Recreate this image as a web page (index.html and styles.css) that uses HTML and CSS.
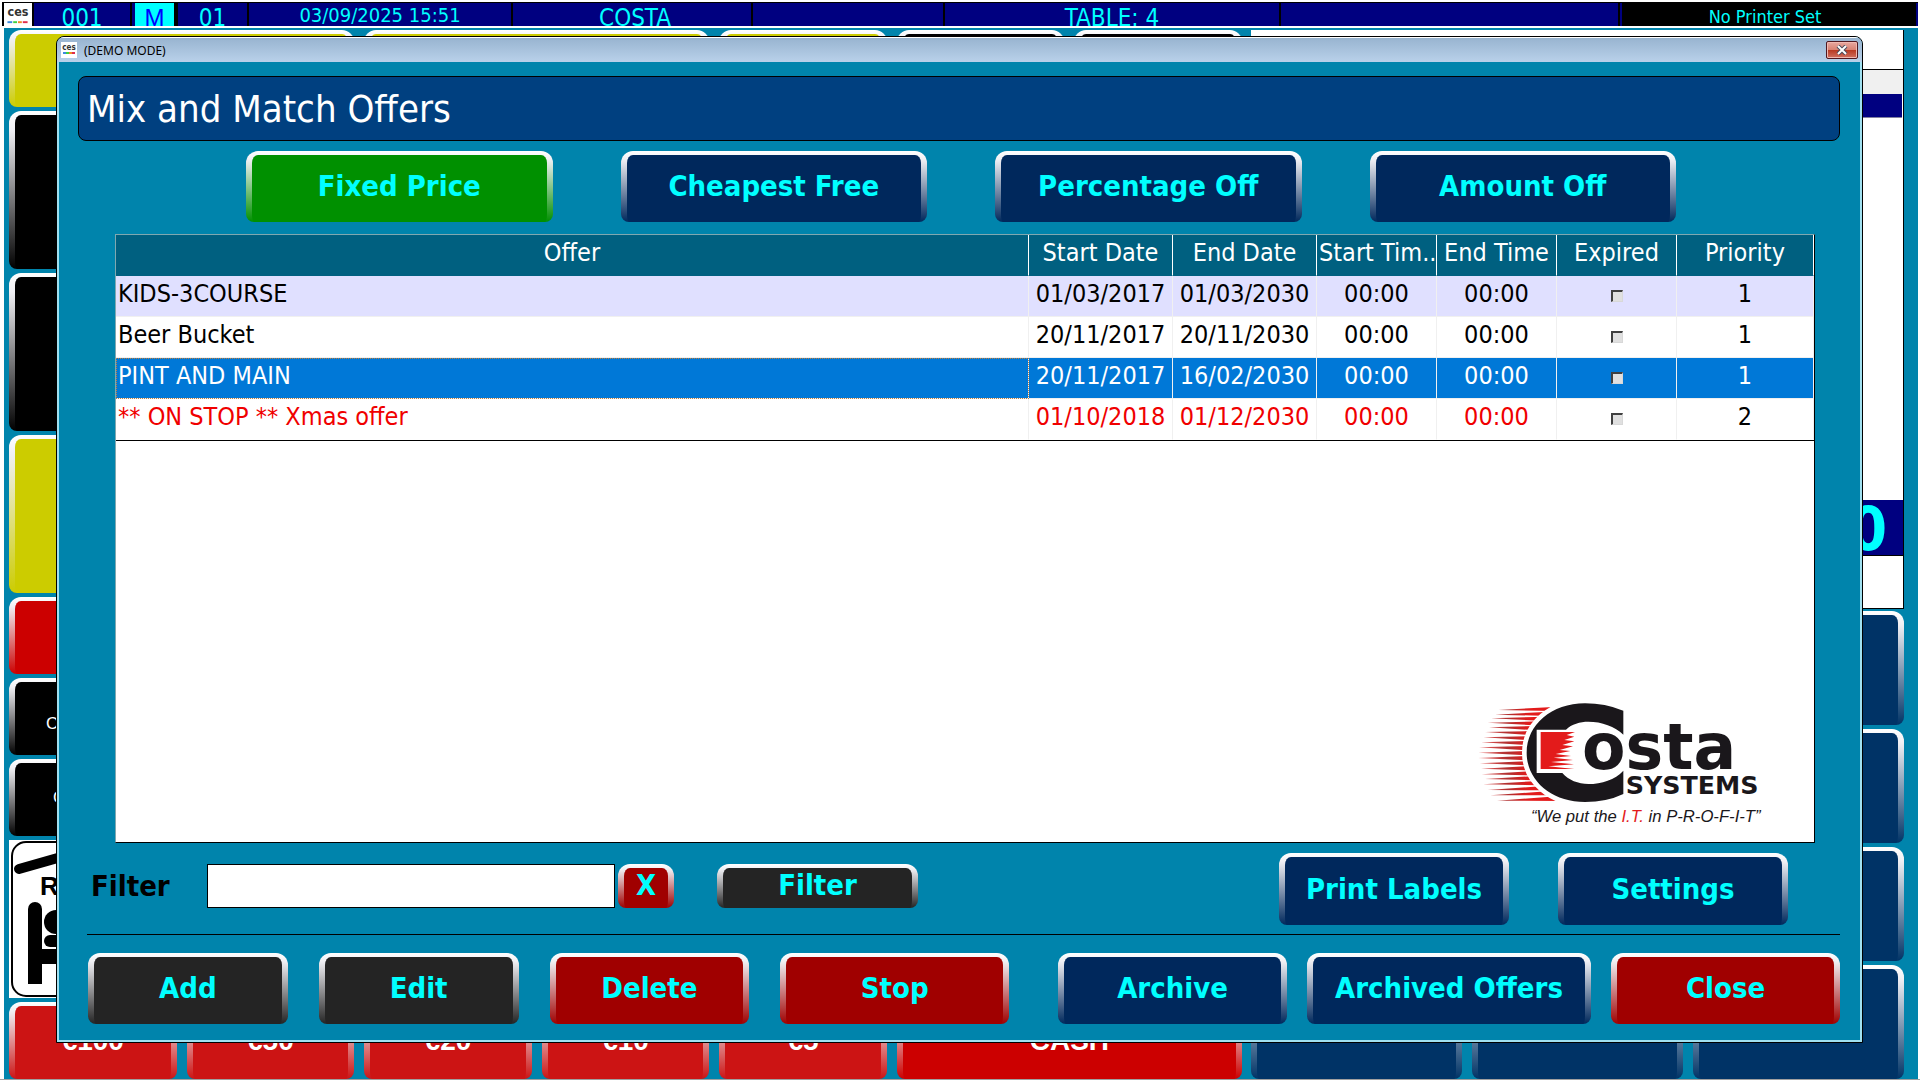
FILE: index.html
```
<!DOCTYPE html>
<html lang="en">
<head>
	<meta charset="utf-8">
	<title>Mix and Match Offers</title>
	<link rel="stylesheet" href="styles.css">
</head>
<body>

	<!-- till screen behind the dialog -->
	<header class="status">
		<div class="logo">
			<svg viewBox="0 0 28 24" width="28" height="23">
				<text x="14" y="14" text-anchor="middle" class="ces">ces</text>
				<path d="M3 20h5" stroke="#3b8be0" stroke-width="2"/>
				<path d="M9 20h4" stroke="#3fd13f" stroke-width="2"/>
				<path d="M14 20h4" stroke="#f08a24" stroke-width="2"/>
				<path d="M19 20h5" stroke="#e02c4c" stroke-width="2"/>
			</svg>
		</div>
		<div>001</div>
		<div class="mode">M</div>
		<div>01</div>
		<div class="date">03/09/2025 15:51</div>
		<div class="site">COSTA</div>
		<div></div>
		<div>TABLE: 4</div>
		<div></div>
		<div class="printer">No Printer Set</div>
	</header>

	<main class="till">
		<div class="keys">
			<button class="btn yellow w2"></button>
			<button class="btn yellow w2"></button>
			<button class="btn yellow"></button>
			<button class="btn black"></button>
			<button class="btn black"></button>
			<button class="btn black first h2"></button>
			<button class="btn black first h2"></button>
			<button class="btn yellow first h2"></button>
			<button class="btn red first"></button>
			<button class="btn black first key-text">C</button>
			<button class="btn black first key-text indent">C</button>
			<button class="room first h2">
				<svg viewBox="0 0 168 158" width="168" height="158">
					<rect x="3" y="2" width="162" height="154" rx="14" fill="#fff" stroke="#000" stroke-width="2"/>
					<path d="M10 29L84 8L158 29" fill="none" stroke="#000" stroke-width="10" stroke-linecap="round"/>
					<text x="31" y="55" class="room-text">R</text>
					<path d="M26 144V69" stroke="#000" stroke-width="14"/>
					<circle cx="26" cy="69" r="7"/>
					<circle cx="47" cy="82" r="12"/>
					<rect x="35" y="95" width="100" height="12" rx="6"/>
					<rect x="26" y="109" width="120" height="15"/>
				</svg>
			</button>
			<button class="btn cash first">€100</button>
			<button class="btn cash">€50</button>
			<button class="btn cash">€20</button>
			<button class="btn cash">€10</button>
			<button class="btn cash">€5</button>
			<button class="btn cash total w2">CASH</button>
		</div>
		<div class="side">
			<div class="receipt">
				<div class="receipt-top"></div>
				<div class="receipt-head"></div>
				<div class="receipt-sel"></div>
				<div class="receipt-lines"></div>
				<div class="receipt-total">0.00</div>
				<div class="receipt-foot"></div>
			</div>
			<div class="side-keys">
				<button class="btn blue"></button>
				<button class="btn blue"></button>
				<button class="btn blue"></button>
				<button class="btn blue"></button>
				<button class="btn blue"></button>
				<button class="btn blue"></button>
				<button class="btn blue"></button>
				<button class="btn blue"></button>
				<button class="btn blue"></button>
				<button class="btn blue"></button>
				<button class="btn blue"></button>
				<button class="btn blue"></button>
			</div>
		</div>
	</main>

	<!-- offers dialog -->
	<section class="dialog">
		<div class="titlebar">
			<svg viewBox="0 0 16 16" width="16" height="16">
				<rect width="16" height="16" fill="#fff"/>
				<text x="8" y="8" text-anchor="middle" class="ces-small">ces</text>
				<path d="M2 11h3" stroke="#3b8be0" stroke-width="2"/>
				<path d="M5 11h3" stroke="#3fd13f" stroke-width="2"/>
				<path d="M8 11h3" stroke="#f08a24" stroke-width="2"/>
				<path d="M11 11h3" stroke="#e02c4c" stroke-width="2"/>
			</svg>
			<span>(DEMO MODE)</span>
			<button class="win-close" aria-label="Close window">
				<svg viewBox="0 0 12 10" width="12" height="10">
					<path d="M2 1L10 9M10 1L2 9" stroke="#4a4a5a" stroke-width="4"/>
					<path d="M2 1L10 9M10 1L2 9" stroke="#fff" stroke-width="2"/>
				</svg>
			</button>
		</div>

		<div class="content">
			<h1>Mix and Match Offers</h1>

			<div class="tabs">
				<button class="btn green">Fixed Price</button>
				<button class="btn navy">Cheapest Free</button>
				<button class="btn navy">Percentage Off</button>
				<button class="btn navy">Amount Off</button>
			</div>

			<div class="list">
				<table>
					<colgroup>
						<col>
						<col class="c-date">
						<col class="c-date">
						<col class="c-time">
						<col class="c-time">
						<col class="c-time">
						<col class="c-prio">
					</colgroup>
					<thead>
						<tr>
							<th>Offer</th>
							<th>Start Date</th>
							<th>End Date</th>
							<th class="cut">Start Tim..</th>
							<th>End Time</th>
							<th>Expired</th>
							<th>Priority</th>
						</tr>
					</thead>
					<tbody>
						<tr class="alt">
							<td>KIDS-3COURSE</td>
							<td>01/03/2017</td>
							<td>01/03/2030</td>
							<td>00:00</td>
							<td>00:00</td>
							<td><input type="checkbox" aria-label="Expired" disabled></td>
							<td>1</td>
						</tr>
						<tr>
							<td>Beer Bucket</td>
							<td>20/11/2017</td>
							<td>20/11/2030</td>
							<td>00:00</td>
							<td>00:00</td>
							<td><input type="checkbox" aria-label="Expired" disabled></td>
							<td>1</td>
						</tr>
						<tr class="selected">
							<td>PINT AND MAIN</td>
							<td>20/11/2017</td>
							<td>16/02/2030</td>
							<td>00:00</td>
							<td>00:00</td>
							<td><input type="checkbox" aria-label="Expired" disabled></td>
							<td>1</td>
						</tr>
						<tr class="stopped">
							<td>** ON STOP ** Xmas offer</td>
							<td>01/10/2018</td>
							<td>01/12/2030</td>
							<td>00:00</td>
							<td>00:00</td>
							<td><input type="checkbox" aria-label="Expired" disabled></td>
							<td>2</td>
						</tr>
					</tbody>
				</table>

				<svg class="brand" viewBox="110 60 930 390" width="310" height="130">
					<defs>
						<linearGradient id="speed" gradientUnits="userSpaceOnUse" x1="120" y1="0" x2="340" y2="0">
							<stop offset="0" stop-color="#e86060"/>
							<stop offset="0.4" stop-color="#b03030"/>
							<stop offset="0.7" stop-color="#e31b1b"/>
							<stop offset="1" stop-color="#e31b1b"/>
						</linearGradient>
					</defs>
					<g fill="url(#speed)">
						<path d="M180 96L360 86V99Z"/>
						<path d="M170 110L335 101V114Z"/>
						<path d="M158 121L320 116V129Z"/>
						<path d="M148 134L305 130V143Z"/>
						<path d="M152 148L295 144V157Z"/>
						<path d="M140 162L288 159V172Z"/>
						<path d="M135 178L280 174V187Z"/>
						<path d="M128 193L275 189V202Z"/>
						<path d="M122 208L270 204V217Z"/>
						<path d="M120 224L270 219V232Z"/>
						<path d="M120 240L270 234V247Z"/>
						<path d="M124 256L272 249V262Z"/>
						<path d="M128 272L275 264V277Z"/>
						<path d="M130 289L282 279V292Z"/>
						<path d="M140 303L292 294V307Z"/>
						<path d="M134 319L300 309V322Z"/>
						<path d="M148 336L315 324V337Z"/>
						<path d="M156 352L335 339V352Z"/>
						<path d="M176 368L365 354V369Z"/>
					</g>
					<path d="M555 98Q500 76 440 76C340 76 265 140 265 224C265 308 340 372 440 372Q505 372 555 348V278C530 305 490 318 450 318C420 318 390 306 372 285H295V155H383C400 138 425 131 450 131C490 131 530 145 555 170Z" fill="#1a171b" stroke="#fff" stroke-width="28" paint-order="stroke"/>
					<path d="M296 156H410V162H302V284H296Z" fill="#fff"/>
					<path d="M307 162H410L385 171L408 176L378 186L408 190L372 201L404 205L364 216L396 219L352 228L398 234L346 239L404 246L338 252L407 259L330 265L408 273H307Z" fill="#e31b1b"/>
					<circle cx="499" cy="222" r="64" fill="#fff"/>
					<text x="431" y="274" class="osta">osta</text>
					<text x="562" y="348" class="systems">SYSTEMS</text>
					<text x="278" y="433" class="motto">“We put the <tspan fill="#e31b1b">I.T.</tspan> in P-R-O-F-I-T”</text>
				</svg>
			</div>

			<div class="tools">
				<form class="filter" onsubmit="return false">
					<label for="filter">Filter</label>
					<input type="text" id="filter">
					<button type="reset" class="btn dark-red clear">X</button>
					<button class="btn dark go">Filter</button>
				</form>
				<button class="btn navy wide">Print Labels</button>
				<button class="btn navy wide">Settings</button>
			</div>

			<div class="actions">
				<div class="edit-group">
					<button class="btn dark">Add</button>
					<button class="btn dark">Edit</button>
					<button class="btn dark-red">Delete</button>
					<button class="btn dark-red">Stop</button>
				</div>
				<div class="archive-group">
					<button class="btn navy">Archive</button>
					<button class="btn navy">Archived Offers</button>
					<button class="btn dark-red">Close</button>
				</div>
			</div>
		</div>
	</section>

</body>
</html>
```
FILE: styles.css
```
* {
	box-sizing: border-box;
}
body {
	position: relative;
	display: flex;
	flex-direction: column;
	height: 100vh;
	margin: 0;
	padding: 2px 2px 0 2px;
	background: #fff;
	border-bottom: 1px solid #a0a0a0;
	overflow: hidden;
	font-family: "DejaVu Sans Condensed", "DejaVu Sans", sans-serif;
}

/* status bar */
.status {
	display: grid;
	grid-template-columns: 32fr 98fr 46fr 71fr 264fr 240fr 192fr 336fr 339fr 298fr;
	height: 24px;
	background: #000;
	border-top: 1px solid #000;
	color: #00ffff;
	font-size: 24px;
	line-height: 30px;
	text-align: center;
}
.status div {
	height: 23px;
	overflow: hidden;
	background: #000080;
	border-right: 2px solid #000;
}
.status .logo {
	background: #fff;
	border-left: 2px solid #000;
}
.status .logo svg {
	display: block;
}
.ces {
	font: bold 13px "DejaVu Sans Condensed", sans-serif;
	fill: #333;
}
.ces-small {
	font: bold 8px "DejaVu Sans Condensed", sans-serif;
	fill: #333;
}
.status .mode {
	background: #00ffff;
	border-left: 3px solid #000080;
	border-right: 4px solid #000;
	color: #0000ff;
	font-family: "Liberation Sans", sans-serif;
}
.status .date {
	font-size: 20px;
	line-height: 25px;
}
.status .site {
	padding-left: 6px;
}
.status .printer {
	padding-right: 8px;
	background: #000;
	border-left: 2px solid #000080;
	border-right: 2px solid #000080;
	font-size: 18px;
	line-height: 27px;
}

/* glossy buttons */
.btn {
	--c: #00285c;
	min-width: 0;
	margin: 0;
	padding: 0 0 5px;
	border: solid transparent;
	border-width: 4px 6px 0;
	border-radius: 12px 12px 8px 8px;
	background: linear-gradient(var(--c), var(--c)) padding-box, linear-gradient(#fff, #f0f0f4 12%, var(--c)) border-box;
	color: #00ffff;
	font-family: inherit;
	font-size: 29px;
	font-weight: bold;
	white-space: nowrap;
}
.green { --c: #009000; }
.dark { --c: #242424; }
.dark-red { --c: #a00000; }
.yellow { --c: #cccc00; }
.black { --c: #000; }
.red { --c: #cc0000; }
.blue { --c: #003366; }

/* till */
.till {
	flex: 1;
	min-height: 0;
	display: grid;
	grid-template-columns: 1233fr 653fr;
	gap: 9px;
	margin-top: 2px;
	margin-left: 2px;
	padding: 2px 14px 0 5px;
	background: #0084ac;
}
.keys {
	display: grid;
	grid-template-columns: repeat(7, 1fr);
	grid-template-rows: repeat(13, 1fr);
	gap: 4px 10px;
	min-height: 0;
}
.w2 { grid-column-end: span 2; }
.h2 { grid-row-end: span 2; }
.first { grid-column-start: 1; }
.key-text {
	padding: 10px 0 0 31px;
	color: #fff;
	font-family: "Liberation Sans", sans-serif;
	font-size: 17px;
	font-weight: normal;
	text-align: left;
}
.indent {
	padding: 0 0 4px 38px;
}
.room {
	min-height: 0;
	padding: 0;
	border: 0;
	background: #fff;
	overflow: hidden;
}
.room svg {
	display: block;
}
.room-text {
	font: bold 26px "Liberation Sans", sans-serif;
}
.cash {
	--c: #cc1414;
	padding: 0 0 4px;
	color: #fff;
	font-family: "Liberation Sans", sans-serif;
	font-size: 28px;
}
.total { --c: #cc0000; }

.side {
	display: flex;
	flex-direction: column;
	gap: 2px;
	min-height: 0;
}
.receipt {
	flex: 578;
	display: flex;
	flex-direction: column;
	background: #fff;
	border-right: 1px solid #000;
}
.receipt-top {
	height: 40px;
	border-bottom: 1px solid #000;
}
.receipt-head {
	height: 24px;
	background: #f0f0f0;
}
.receipt-sel {
	height: 24px;
	margin-right: 1px;
	background: #000080;
	border-bottom: 1px solid #8080a0;
}
.receipt-lines {
	flex: 1;
}
.receipt-total {
	height: 55px;
	padding-right: 16px;
	background: #000080;
	color: #00ffff;
	font-size: 60px;
	font-weight: bold;
	line-height: 59px;
	text-align: right;
}
.receipt-foot {
	height: 54px;
	border-top: 1px solid #000;
	border-bottom: 1px solid #000;
}
.side-keys {
	flex: 468;
	display: grid;
	grid-template-columns: repeat(3, 1fr);
	grid-template-rows: repeat(4, 1fr);
	gap: 4px 10px;
}

/* dialog */
.dialog {
	position: absolute;
	inset: 36px 57px 36px 56px;
	display: flex;
	flex-direction: column;
	border: 1px solid #000;
	border-radius: 8px 8px 0 0;
	box-shadow: inset 0 0 0 2px #a0e0f0;
	background: #0084ac;
	overflow: hidden;
}
.titlebar {
	display: flex;
	align-items: center;
	gap: 7px;
	height: 25px;
	padding: 0 4px;
	background: linear-gradient(#98b4d0, #b9d1ea);
	border-top: 1px solid #fff;
	font-family: "Noto Sans", sans-serif;
	font-size: 12px;
	color: #000;
}
.win-close {
	display: flex;
	align-items: center;
	justify-content: center;
	width: 32px;
	height: 18px;
	margin-left: auto;
	padding: 0;
	border: 1px solid #501820;
	border-radius: 2px;
	box-shadow: inset 0 0 0 1px #f0b8b0;
	background: linear-gradient(#e8a8a0, #d88070 50%, #b83820 50%, #d07060);
}
.content {
	flex: 1;
	display: flex;
	flex-direction: column;
	margin: 0 2px 2px 1px;
	padding: 14px 20px 16px;
}
h1 {
	height: 65px;
	margin: 0 0 10px;
	padding-left: 8px;
	border: 1px solid #000;
	border-radius: 8px;
	background: #004080;
	color: #fff;
	font-size: 38px;
	font-weight: normal;
	line-height: 65px;
}
.tabs {
	display: grid;
	grid-template-columns: repeat(4, 1fr);
	gap: 68px;
	height: 71px;
	margin: 0 164px 12px 168px;
}

/* offer list */
.list {
	flex: 1;
	display: flex;
	flex-direction: column;
	margin: 0 25px 10px 37px;
	border: 1px solid #000;
	border-top-color: #80a8b0;
	border-left-color: #80a8b0;
	background: #fff;
}
table {
	width: 100%;
	table-layout: fixed;
	border-collapse: separate;
	border-spacing: 0;
	border-bottom: 1px solid #000;
	font-size: 25px;
	line-height: 32px;
}
.c-date { width: 144px; }
.c-time { width: 120px; }
.c-prio { width: 137px; }
th, td {
	height: 41px;
	padding: 0 0 4px;
	border-right: 1px solid #f0f0f0;
	border-bottom: 1px solid #f0f0f0;
	text-align: center;
	white-space: nowrap;
	overflow: hidden;
}
th {
	background: #006080;
	border-right-color: #fff;
	border-bottom-color: #006080;
	color: #fff;
	font-weight: normal;
}
th.cut {
	padding-left: 2px;
	text-align: left;
}
td:first-child {
	padding-left: 2px;
	text-align: left;
}
tr:last-child td {
	border-bottom-color: #fff;
}
.alt td {
	background: #e0e0ff;
}
.selected td {
	background: #0078d7;
	color: #fff;
}
.selected td:first-child {
	outline: 1px dotted #c08040;
	outline-offset: -1px;
}
.stopped td {
	color: #f00000;
}
.stopped td:last-child {
	color: #000;
}
td input {
	appearance: none;
	display: block;
	width: 12px;
	height: 12px;
	margin: 3px auto 0;
	border: 1px solid #d8d8d8;
	border-top: 2px solid #404040;
	border-left: 2px solid #404040;
	background: #e0e0e0;
}
.brand {
	margin: auto 29px 14px auto;
}
.osta {
	font: bold 190px "DejaVu Sans", sans-serif;
	fill: #1a171b;
}
.systems {
	font: bold 76px "DejaVu Sans", sans-serif;
	fill: #1a171b;
}
.motto {
	font: italic 50px "Liberation Sans", sans-serif;
	fill: #1a171b;
}

/* filter row */
.tools {
	display: flex;
	gap: 49px;
	height: 82px;
	margin: 0 0 18px 9px;
	padding: 0 52px 9px 4px;
	border-bottom: 1px solid #000;
}
.filter {
	flex: 1;
	display: flex;
	align-items: center;
	padding-bottom: 7px;
}
.filter label {
	width: 116px;
	font-size: 29px;
	font-weight: bold;
}
.filter input {
	width: 408px;
	height: 44px;
	border: 1px solid #000;
	background: #fff;
	font-family: inherit;
	font-size: 25px;
}
.filter .btn {
	height: 44px;
}
.filter .clear {
	width: 56px;
	margin-left: 3px;
}
.filter .go {
	width: 201px;
	margin-left: 43px;
}
.wide {
	width: 230px;
}

/* bottom buttons */
.actions {
	display: grid;
	grid-template-columns: 921fr 782fr;
	gap: 49px;
	height: 71px;
	margin-left: 10px;
}
.edit-group, .archive-group {
	display: grid;
}
.edit-group {
	grid-template-columns: 200fr 200fr 200fr 229fr;
	gap: 31px;
}
.archive-group {
	grid-template-columns: 229fr 284fr 229fr;
	gap: 20px;
}
```
